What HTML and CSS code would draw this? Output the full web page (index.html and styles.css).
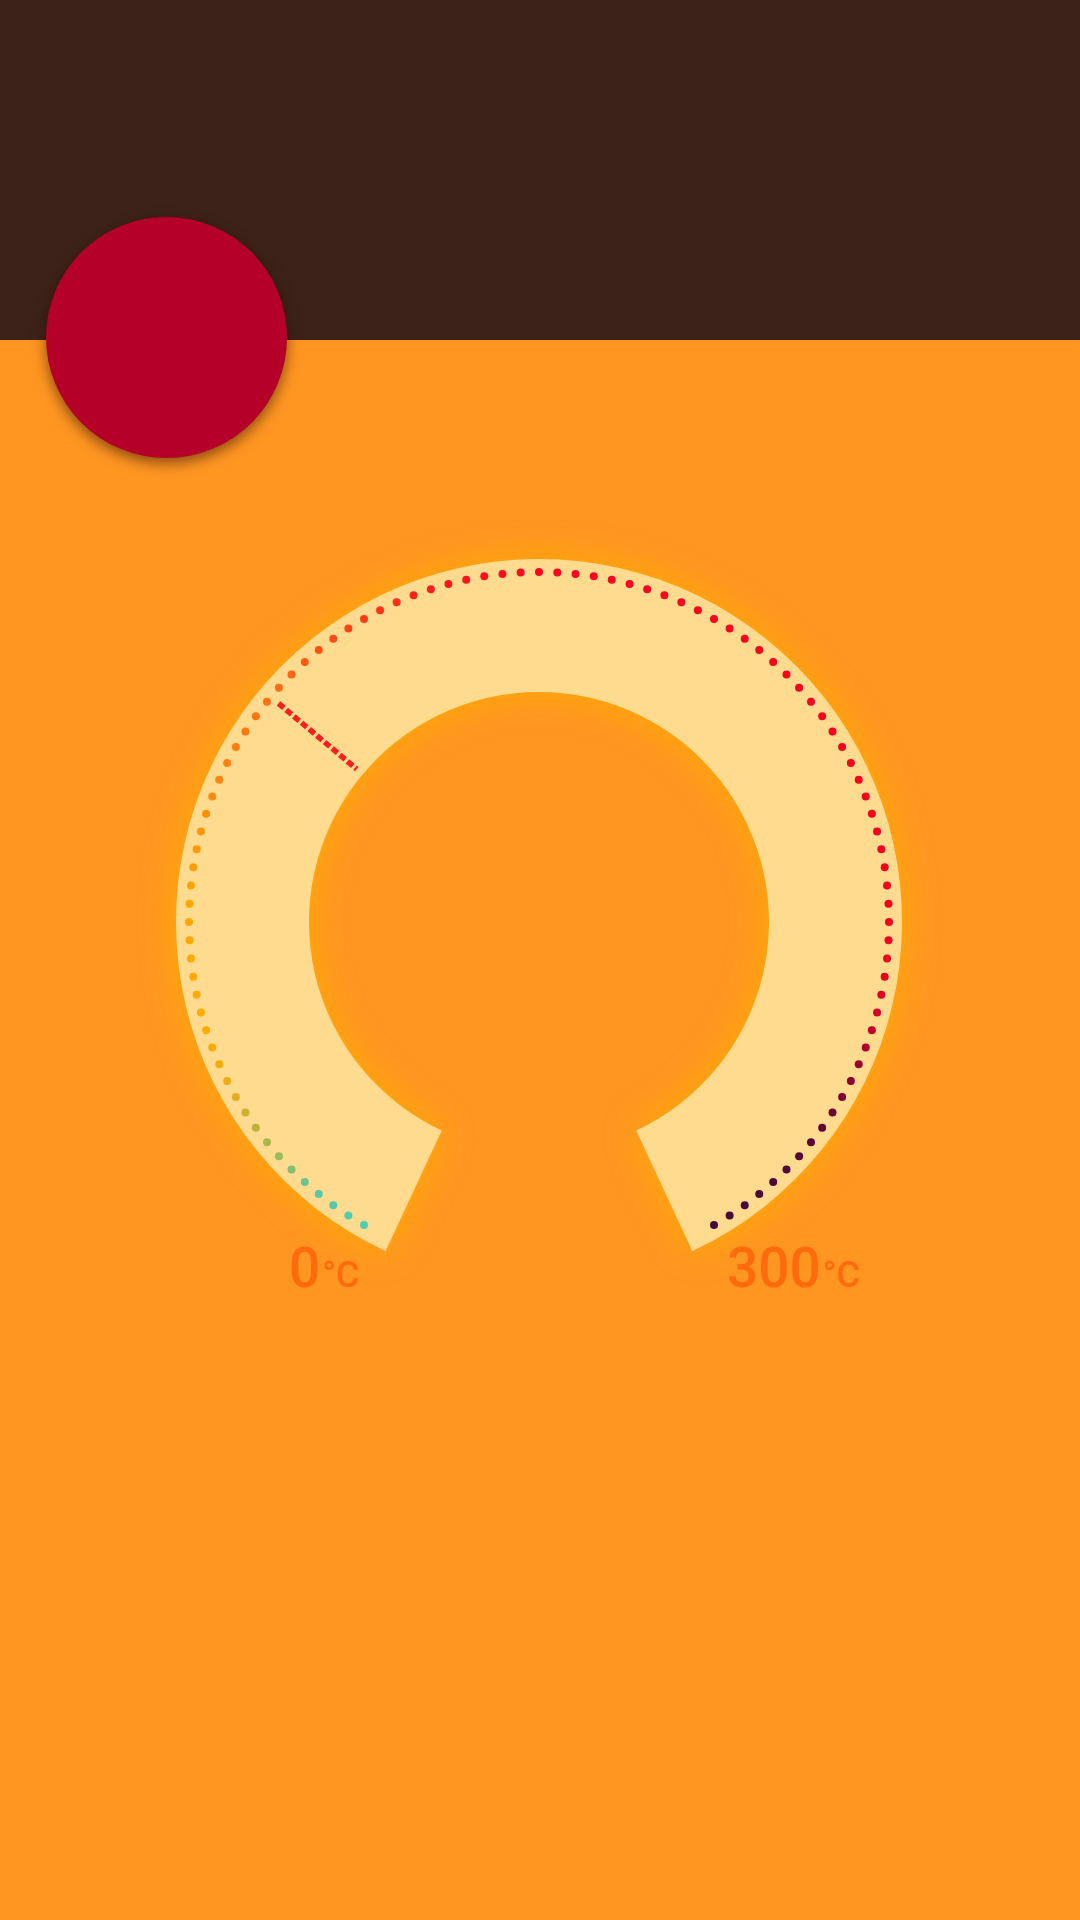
FILE: index.html
```html
<!DOCTYPE html>
<html lang="en">
<head>
<meta charset="utf-8">
<title>Thermometer</title>
<link rel="stylesheet" href="styles.css">
</head>
<body>
<div class="screen">
  <header class="topbar">
    <div class="fab"></div>
  </header>
  <main class="content">
    <div class="gauge">
      <svg class="gauge-svg" viewBox="0 0 800 800" width="800" height="800">
        <path class="ring" d="M 246.6 729 A 363 363 0 1 1 553.4 729 L 497.2 608.4 A 230 230 0 1 0 302.8 608.4 Z"/>
        <g id="dots"></g>
        <line id="needle" class="needle" x1="0" y1="0" x2="0" y2="0"/>
      </svg>
      <div class="label label-min"><span class="num">0</span><span class="unit">°C</span></div>
      <div class="label label-max"><span class="num">300</span><span class="unit">°C</span></div>
    </div>
  </main>
</div>
<script src="script.js"></script>
</body>
</html>
```
FILE: styles.css
```css
html, body {
  margin: 0;
  padding: 0;
}
body {
  background: #ff9622;
  font-family: Roboto, "Liberation Sans", sans-serif;
}
.screen {
  width: 1080px;
  height: 1920px;
  display: flex;
  flex-direction: column;
  background: #ff9622;
  overflow: hidden;
}
.topbar {
  position: relative;
  height: 340px;
  flex: 0 0 340px;
  background: #3d2219;
  z-index: 2;
}
.fab {
  position: absolute;
  left: 46px;
  top: 217px;
  width: 241px;
  height: 241px;
  border-radius: 50%;
  background: #b5002a;
  box-shadow: 0 5px 14px rgba(40, 10, 0, 0.55);
}
.content {
  display: flex;
  justify-content: center;
  padding-top: 182px;
}
.gauge {
  position: relative;
  width: 800px;
  height: 800px;
  margin-left: -2px;
}
.gauge-svg {
  display: block;
  overflow: visible;
}
.ring {
  fill: #fedb8e;
  filter: drop-shadow(0 0 18px rgba(255, 172, 0, 0.95));
}
.needle {
  stroke: #ff1e1e;
  stroke-width: 5.5;
  stroke-dasharray: 7 3;
}
.label {
  position: absolute;
  top: 719px;
  color: #ff6a0c;
  font-weight: 500;
  line-height: 1;
  white-space: nowrap;
}
.label-min {
  left: 150px;
}
.label-max {
  left: 588px;
}
.num {
  font-size: 55px;
}
.unit {
  font-size: 36px;
  margin-left: 2px;
}
```
FILE: script.js
```js
(function () {
  var cx = 400, cy = 400, R = 350;
  var stops = [
    [0, [82, 205, 178]],
    [10, [88, 200, 165]],
    [16, [140, 188, 105]],
    [24, [190, 178, 60]],
    [32, [235, 172, 20]],
    [42, [255, 172, 0]],
    [65, [255, 165, 0]],
    [85, [255, 132, 16]],
    [100, [255, 112, 20]],
    [115, [255, 72, 22]],
    [135, [255, 22, 30]],
    [150, [255, 5, 32]],
    [245, [245, 0, 30]],
    [255, [215, 0, 38]],
    [265, [150, 0, 50]],
    [275, [100, 5, 55]],
    [285, [78, 8, 58]],
    [300, [72, 10, 58]]
  ];
  function colorAt(v) {
    for (var i = 0; i < stops.length - 1; i++) {
      var a = stops[i], b = stops[i + 1];
      if (v >= a[0] && v <= b[0]) {
        var t = (v - a[0]) / (b[0] - a[0]);
        var c = [0, 1, 2].map(function (k) { return Math.round(a[1][k] + (b[1][k] - a[1][k]) * t); });
        return 'rgb(' + c.join(',') + ')';
      }
    }
    return 'rgb(72,10,58)';
  }
  var ns = 'http://www.w3.org/2000/svg';
  var g = document.getElementById('dots');
  for (var i = 0; i <= 100; i++) {
    var v = i * 3;
    var th = (210 + v) * Math.PI / 180;
    var c = document.createElementNS(ns, 'circle');
    c.setAttribute('cx', (cx + R * Math.sin(th)).toFixed(2));
    c.setAttribute('cy', (cy - R * Math.cos(th)).toFixed(2));
    c.setAttribute('r', '4');
    c.setAttribute('fill', colorAt(v));
    g.appendChild(c);
  }
  var value = 100;
  var a = (210 + value) * Math.PI / 180;
  var n = document.getElementById('needle');
  n.setAttribute('x1', (cx + 340 * Math.sin(a)).toFixed(2));
  n.setAttribute('y1', (cy - 340 * Math.cos(a)).toFixed(2));
  n.setAttribute('x2', (cx + 238 * Math.sin(a)).toFixed(2));
  n.setAttribute('y2', (cy - 238 * Math.cos(a)).toFixed(2));
})();
```
